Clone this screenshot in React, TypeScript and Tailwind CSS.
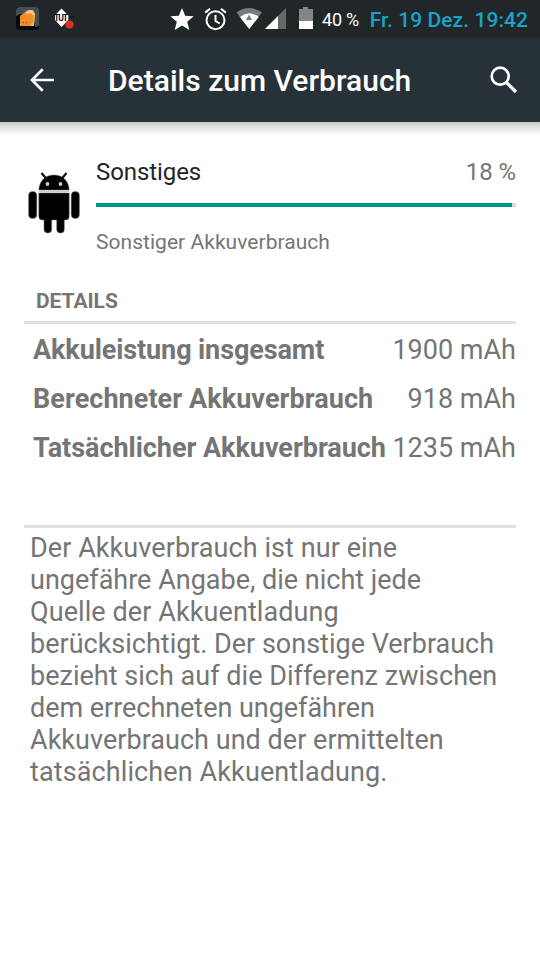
const rows = [
  { label: 'Akkuleistung insgesamt', value: '1900 mAh', tracking: 'tracking-[-0.1px]' },
  { label: 'Berechneter Akkuverbrauch', value: '918 mAh', tracking: 'tracking-[0.06px]' },
  { label: 'Tatsächlicher Akkuverbrauch', value: '1235 mAh', tracking: 'tracking-[-0.04px]' },
];

const noteLines = [
  { text: 'Der Akkuverbrauch ist nur eine', tracking: 'tracking-[0.07px]' },
  { text: 'ungefähre Angabe, die nicht jede', tracking: 'tracking-normal' },
  { text: 'Quelle der Akkuentladung', tracking: 'tracking-[0.09px]' },
  { text: 'berücksichtigt. Der sonstige Verbrauch', tracking: 'tracking-normal' },
  { text: 'bezieht sich auf die Differenz zwischen', tracking: 'tracking-[0.02px]' },
  { text: 'dem errechneten ungefähren', tracking: 'tracking-[-0.04px]' },
  { text: 'Akkuverbrauch und der ermittelten', tracking: 'tracking-[0.03px]' },
  { text: 'tatsächlichen Akkuentladung.', tracking: 'tracking-[0.11px]' },
];

function StatusIcons() {
  return (
    <>
      <svg className="ml-4 h-6 w-6 shrink-0" viewBox="0 0 24 24">
        <rect width="23" height="23" rx="4" fill="#070809" />
        <path d="M3 0H19Q23 0 23 4V19L19 20V7H4L0 9V4Q0 1 3 0Z" fill="#465052" />
        <path d="M4 9 9 5l3-2 5 0 2 4-1 12H4Z" fill="#ee8d2b" />
        <path d="m10 5 4-2 3 1 2 3-1 2-3-3-4 1Z" fill="#f2c99a" />
        <path d="m18 7-1 8-3 4h4l1-11Z" fill="#e3b95a" />
        <path d="M7 15h1v1H7zm3 0h1v1h-1z" fill="#c9281b" />
      </svg>
      <svg className="ml-[14px] h-6 w-6 shrink-0 overflow-visible" viewBox="0 0 24 24">
        <path d="m7.5 1.5 6.8 7v4.5l-6.8 7L1 13V8.500Z" fill="#fff" />
        <text x="0" y="13.5" fill="#101416" fontFamily="Roboto, sans-serif" fontSize="8.5" fontWeight="700" textLength="14">TUT</text>
        <path d="M16 10h1.500m1 0h1.500" stroke="#090b0c" strokeWidth="1.5" />
        <circle cx="15.5" cy="17.5" r="4.1" fill="#d72e27" />
      </svg>
      <svg className="ml-[92px] h-6 w-6 shrink-0" viewBox="0 0 24 24">
        <path d="m12 1 3.2 7.7 8.5.6-6.5 5.4 2.2 8.2-7.4-4.5-7.300 4.5 2.1-8.2L.4 9.3l8.400-.6Z" fill="#fff" />
      </svg>
      <svg className="ml-[10px] h-6 w-6 shrink-0" viewBox="0 0 24 24" fill="none" stroke="#fff" strokeWidth="2">
        <circle cx="11.5" cy="13.2" r="9" />
        <path d="M11.5 8v6l4.2 2.5M1.2 5.6 6 1.700M17 1.7l4.8 3.9" />
      </svg>
      <svg className="ml-[8px] h-6 w-[52px] shrink-0" viewBox="0 0 52 24">
        <path d="M.5 5.5Q13-3.400 26 5.5L13.2 22Z" fill="#777b7d" />
        <path d="M4 9.900Q13 2.800 22.700 9.900L13.2 22Z" fill="#fff" />
        <path d="m13 7.500 3 5.5h-6Z" fill="#777b7d" />
        <path d="M50 1v21H29Z" fill="#63696b" />
        <path d="M42 9.000V22H29Z" fill="#fff" />
      </svg>
      <svg className="ml-[10px] h-6 w-[16px] shrink-0" viewBox="0 0 16 24">
        <path d="M5 0h5v2h5v20H1V2h4Z" fill="#858585" />
        <path d="M1 14h14v8H1Z" fill="#fff" />
      </svg>
    </>
  );
}

function Robot() {
  return (
    <svg className="mt-6 ml-1 h-[62px] w-[52px] shrink-0 overflow-visible" viewBox="0 0 52 62">
      <g fill="#000" stroke="#777" strokeWidth=".5">
        <path d="M10.800 18C11.300 9 17 3 26 3s14.700 6 15.200 15Z" />
        <path d="m13.500 1 5 6M38.500 1l-5 6" stroke="#111" strokeWidth="2.2" />
        <path d="M10.800 21h30.400v23.500q0 3.500-3.500 3.500H36.300v9.500q0 3.500-3.800 3.500t-3.800-3.500V48h-5v9.500q0 3.500-3.800 3.500T16 57.500V48h-1.700q-3.500 0-3.500-3.500Z" />
        <rect x=".6" y="19.500" width="8.200" height="27" rx="4.100" />
        <rect x="43.200" y="19.500" width="8.200" height="27" rx="4.100" />
      </g>
      <path d="M10.800 19.500h30.400" stroke="#c6ceca" strokeWidth="2.4" />
      <circle cx="19.500" cy="12" r="1.900" fill="#c3cecd" />
      <circle cx="32.500" cy="12" r="1.900" fill="#c3cecd" />
    </svg>
  );
}

export default function App() {
  return (
    <div className="flex h-[960px] w-[540px] flex-col overflow-hidden bg-white font-['Roboto',sans-serif] text-[#757575]">
      <div className="flex h-[38px] shrink-0 items-start bg-[#212629] pt-[7px] whitespace-nowrap">
        <StatusIcons />
        <span className="ml-[8px] text-[18px] leading-[26px] tracking-[-0.2px] text-white">40 %</span>
        <span className="mr-3 ml-auto text-[21px] leading-[26px] font-medium tracking-[0.06px] text-[#18a4cb]">Fr. 19 Dez. 19:42</span>
      </div>
      <header className="flex h-[84px] shrink-0 items-center bg-[#273238] text-white">
        <svg className="ml-[30px] h-6 w-6 shrink-0" viewBox="0 0 24 24" fill="none" stroke="#fff" strokeWidth="2.7">
          <path d="M24 12H2M12.7 1.3 2 12l10.7 10.7" />
        </svg>
        <h1 className="ml-[54px] pt-[2px] text-[30px] leading-[36px] font-medium tracking-[0.02px] whitespace-nowrap">Details zum Verbrauch</h1>
        <svg className="mr-[22px] ml-auto h-7 w-7 shrink-0" viewBox="0 0 28 28" fill="none" stroke="#fff" strokeWidth="2.7">
          <circle cx="10.2" cy="10.2" r="8.500" />
          <path d="m16.5 16.5 9.5 9.5" strokeWidth="3.2" />
        </svg>
      </header>
      <div className="h-[14px] shrink-0 bg-linear-to-b from-[#c5c8c5] via-[#e7e9e7] to-white" />
      <main className="px-6 pt-3">
        <section className="flex h-[133px]">
          <Robot />
          <div className="ml-4 min-w-0 flex-1">
            <div className="flex justify-between pt-[10px] text-[24px] leading-[28px] tracking-[-0.08px]">
              <span className="text-[#212529]">Sonstiges</span>
              <span>18 %</span>
            </div>
            <div className="mt-[17px] h-1 bg-[#d8d8d8]">
              <div className="h-1 w-[416px] bg-[#009688]" />
            </div>
            <p className="mt-[22px] text-[21px] leading-[26px] tracking-[0.04px]">Sonstiger Akkuverbrauch</p>
          </div>
        </section>
        <h2 className="h-[40px] pt-[7px] pl-3 text-[21px] leading-[26px] font-bold tracking-[-0.05px]">DETAILS</h2>
        <div className="h-[3px] bg-[#e0e0e0]" />
        <dl className="h-[201px] pt-[2px]">
          {rows.map((row) => (
            <div key={row.label} className="flex h-[49px] items-center justify-between pl-[9px] text-[27px] whitespace-nowrap">
              <dt className={`font-bold ${row.tracking}`}>{row.label}</dt>
              <dd>{row.value}</dd>
            </div>
          ))}
        </dl>
        <div className="h-[3px] bg-[#e0e0e0]" />
        <p className="pt-[4px] pl-[6px] text-[27px] leading-[32px] whitespace-nowrap">
          {noteLines.map((line) => (
            <span key={line.text} className={`block ${line.tracking}`}>{line.text}</span>
          ))}
        </p>
      </main>
    </div>
  );
}
